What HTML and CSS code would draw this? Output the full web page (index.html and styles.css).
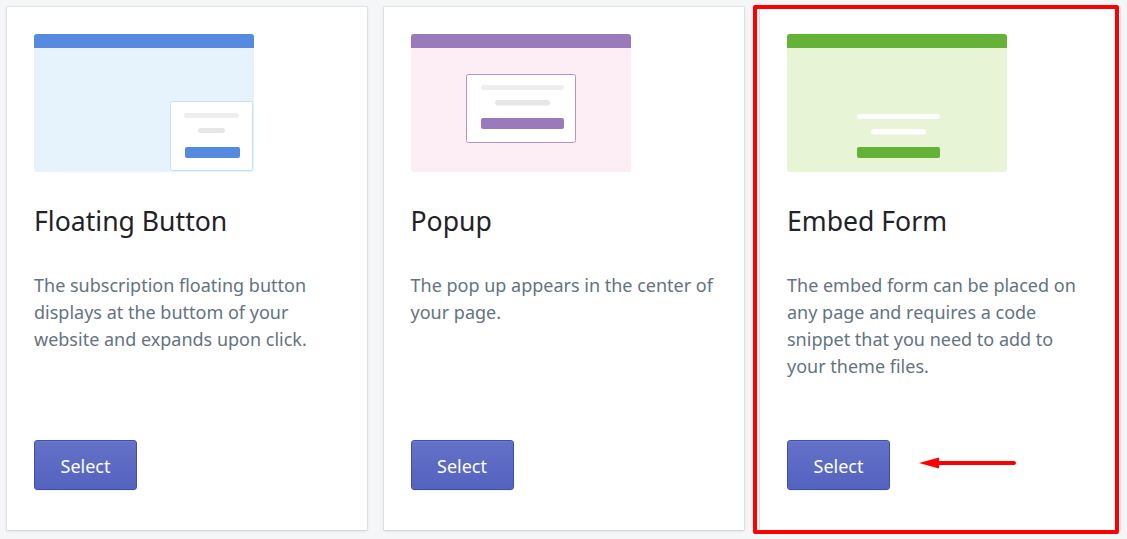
FILE: index.html
```html
<!DOCTYPE html>
<html lang="en">
<head>
<meta charset="utf-8">
<title>Choose a widget</title>
<link rel="stylesheet" href="styles.css">
</head>
<body>
<div class="cards">
  <div class="card">
    <svg class="thumb" width="220" height="138" viewBox="0 0 220 138">
      <rect x="0" y="0" width="220" height="138" rx="3" fill="#e6f3fd"/>
      <path d="M0 3a3 3 0 0 1 3-3h214a3 3 0 0 1 3 3v11H0z" fill="#558ae0"/>
      <rect x="136.5" y="67.5" width="82" height="69" rx="2" fill="#fff" stroke="#c5dff4"/>
      <rect x="150" y="79" width="55" height="5" rx="2.5" fill="#eeeeee"/>
      <rect x="164" y="94" width="27" height="5" rx="2.5" fill="#e6e6e6"/>
      <rect x="151" y="113" width="55" height="11" rx="2" fill="#558ae0"/>
    </svg>
    <h2 class="title">Floating Button</h2>
    <p class="desc">The subscription floating button displays at the buttom of your website and expands upon click.</p>
    <button class="select">Select</button>
  </div>
  <div class="card">
    <svg class="thumb" width="220" height="138" viewBox="0 0 220 138">
      <rect x="0" y="0" width="220" height="138" rx="3" fill="#fdedf5"/>
      <path d="M0 3a3 3 0 0 1 3-3h214a3 3 0 0 1 3 3v11H0z" fill="#9a7aba"/>
      <rect x="55.5" y="40.5" width="109" height="68" rx="2" fill="#fff" stroke="#b194cc"/>
      <rect x="70" y="51" width="83" height="5" rx="2.5" fill="#eeeeee"/>
      <rect x="84" y="66" width="55" height="5.5" rx="2.75" fill="#e6e6e6"/>
      <rect x="70" y="84" width="83" height="11" rx="2" fill="#9a7aba"/>
    </svg>
    <h2 class="title">Popup</h2>
    <p class="desc">The pop up appears in the center of your page.</p>
    <button class="select">Select</button>
  </div>
  <div class="card">
    <svg class="thumb" width="220" height="138" viewBox="0 0 220 138">
      <rect x="0" y="0" width="220" height="138" rx="3" fill="#e7f5d6"/>
      <path d="M0 3a3 3 0 0 1 3-3h214a3 3 0 0 1 3 3v11H0z" fill="#64b238"/>
      <rect x="70" y="80" width="83" height="5" rx="2.5" fill="#ffffff"/>
      <rect x="84" y="95" width="55" height="5.5" rx="2.75" fill="#ffffff"/>
      <rect x="70" y="113" width="83" height="11" rx="2" fill="#64b238"/>
    </svg>
    <h2 class="title">Embed Form</h2>
    <p class="desc">The embed form can be placed on any page and requires a code snippet that you need to add to your theme files.</p>
    <button class="select">Select</button>
  </div>
</div>
<div class="highlight"></div>
<svg class="arrow" width="100" height="14" viewBox="0 0 100 14">
  <path d="M20 7H95" stroke="#ff0000" stroke-width="4" stroke-linecap="round"/>
  <path d="M0 7L20 1.5V12.5z" fill="#ff0000"/>
</svg>
</body>
</html>
```

FILE: styles.css
```css
html, body {
  margin: 0;
  padding: 0;
}
body {
  background: #f4f6f8;
  font-family: "Noto Sans", "Open Sans", sans-serif;
  color: #212b36;
  width: 1127px;
  height: 539px;
  overflow: hidden;
  position: relative;
}
.cards {
  display: flex;
  gap: 16.5px;
  padding: 7px 7px 9px 7px;
  height: 523px;
}
.card {
  box-sizing: border-box;
  width: 360px;
  height: 523px;
  background: #fff;
  box-shadow: 0 0 0 1px rgba(63, 63, 68, 0.07), 0 1px 3px 0 rgba(63, 63, 68, 0.15);
  padding: 27px 27px 40px 27px;
  display: flex;
  flex-direction: column;
  align-items: flex-start;
}
.thumb {
  display: block;
  flex: none;
}
.title {
  margin: 33px 0 0 0;
  font-size: 26.6px;
  line-height: 32px;
  font-weight: 400;
  color: #1f2329;
}
.desc {
  margin: 35px 0 0 0;
  font-size: 18px;
  line-height: 27px;
  color: #637381;
}
.select {
  margin-top: auto;
  width: 103px;
  height: 50px;
  background: linear-gradient(180deg, #6371c7, #5563c1);
  border: 1px solid #3f4eae;
  border-radius: 3px;
  box-shadow: inset 0 1px 0 0 #6f7bcb, 0 1px 0 0 rgba(22, 29, 37, 0.05);
  color: #fff;
  font-family: "Noto Sans", "Open Sans", sans-serif;
  font-size: 18px;
  padding: 2px 0 0 0;
}
.highlight {
  position: absolute;
  left: 753px;
  top: 5px;
  width: 358px;
  height: 521px;
  border: 4px solid #ff0000;
  border-radius: 2px;
}
.arrow {
  position: absolute;
  left: 919px;
  top: 456px;
}
```
